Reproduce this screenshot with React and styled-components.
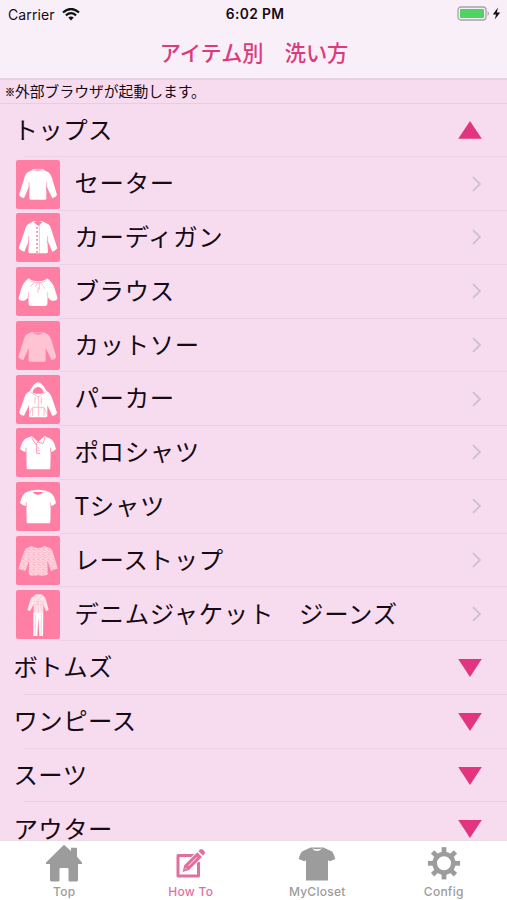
import React, { useState } from "react";
import styled, { createGlobalStyle } from "styled-components";

const GlobalStyle = createGlobalStyle`
  body {
    margin: 0;
    overflow: hidden;
    background: #f7dcef;
  }

  * {
    box-sizing: border-box;
  }
`;

const Screen = styled.div`
  height: 900px;
  display: flex;
  flex-direction: column;
  overflow: hidden;
  background: #f7dcef;
  color: #160a14;
  font-family: "Inter", "Noto Sans CJK JP", sans-serif;
`;

const Header = styled.header`
  flex: none;
  height: 80px;
  background: #f8eff9;
  border-bottom: 2px solid #e5d3e1;
`;

const StatusBar = styled.div`
  height: 27px;
  padding: 0 5px 0 8px;
  display: grid;
  grid-template-columns: 1fr auto 1fr;
  align-items: center;
  font-size: 14px;
  line-height: 27px;
`;

const StatusLeft = styled.div`
  display: flex;
  align-items: center;
  gap: 7px;
  letter-spacing: 0.1px;
`;

const StatusTime = styled.div`
  padding: 1px 0 0;
  font-size: 13.8px;
  font-weight: 600;
  letter-spacing: 0.35px;
`;

const StatusRight = styled.div`
  display: flex;
  align-items: center;
  justify-content: flex-end;
`;

const PageTitle = styled.h1`
  margin: 0;
  height: 51px;
  padding-left: 1px;
  font-family: "Noto Sans CJK JP", sans-serif;
  font-size: 21.2px;
  font-weight: 500;
  line-height: 50px;
  text-align: center;
  color: #dc3a7d;
`;

const Notice = styled.p`
  flex: none;
  margin: 0;
  height: 23.5px;
  padding-left: 5px;
  border-bottom: 1px solid #eaccdf;
  display: flex;
  font-family: "Noto Sans CJK JP", sans-serif;
  font-size: 14.8px;
  line-height: 21px;
`;

const NoticeMark = styled.span`
  font-size: 10px;
  line-height: 23px;
  -webkit-text-stroke: 0.3px #160a14;
`;

const List = styled.div`
  flex: 1;
  min-height: 0;
  overflow: hidden;
`;

const Row = styled.div`
  position: relative;
  height: 53.77px;
  padding: 0 25px 0 ${(props) => (props.$item ? 15.5 : 13.5)}px;
  display: flex;
  align-items: center;

  &::after {
    content: "";
    position: absolute;
    left: ${(props) => (props.$item ? 60 : 24)}px;
    right: 0;
    bottom: 0;
    height: 1px;
    background: #edd0e3;
  }
`;

const RowLabel = styled.span`
  flex: 1;
  padding-left: ${(props) => (props.$item ? 15 : 0)}px;
  padding-bottom: 3.5px;
  font-family: "Noto Sans CJK JP", sans-serif;
  font-size: 24.4px;
  line-height: 36px;
  letter-spacing: ${(props) => (props.$item ? 0.7 : 0.45)}px;
  white-space: pre;
`;

const Thumb = styled.svg`
  flex: none;
  width: 44px;
  height: 49px;
  border-radius: 2px;
  background: #ff7fa4;
`;

const TabBar = styled.nav`
  flex: none;
  height: 60px;
  padding-left: 1px;
  display: grid;
  grid-template-columns: repeat(4, 1fr);
  background: #ffffff;
  border-top: 1px solid #eadde6;
`;

const Tab = styled.div`
  display: flex;
  flex-direction: column;
  align-items: center;
  color: ${(props) => (props.$active ? "#e2709f" : "#9c9c9c")};
`;

const TabIcon = styled.svg`
  width: 42px;
  height: 43px;
`;

const TabLabel = styled.span`
  font-size: 12px;
  font-weight: 500;
  line-height: 15px;
  letter-spacing: 0.25px;
`;

const PINK = "#ff7fa4";

const SHIRT =
  "M50 29 Q66 35 82 29 L97 37 Q104 41 108 54 L123 105 Q119 112 109 115 L91 78 L91 116 Q91 119 87 119 L44 119 Q40 119 40 116 L40 78 L24 115 Q13 112 9 105 L25 54 Q29 40 35 37 Z";
const TEE =
  "M47 25 Q66 35 86 25 L101 31 Q113 35 120 63 Q112 72 104 73 L103 120 Q103 124 99 124 L36 124 Q32 124 32 120 L31 73 Q20 71 12 63 Q19 36 31 31 Z";

function Sweater() {
  return (
    <>
      <path d={SHIRT} fill="#fff" />
      <path d="M50 29 Q66 26 82 29 Q66 38 50 29Z" fill={PINK} stroke="#fff" strokeWidth="2" />
      <path d="M39 67 V91 M92 67 V91" stroke={PINK} strokeWidth="2" />
    </>
  );
}

function Cardigan() {
  return (
    <>
      <path
        d="M52 25 L79 25 L97 34 Q103 38 107 53 L124 106 Q119 113 109 116 L94 82 L96 116 Q96 121 90 121 L43 121 Q37 121 37 116 L39 82 L25 116 Q13 113 8 106 L26 53 Q30 38 36 34 Z"
        fill="#fff"
      />
      <path d="M53 28 Q66 22 79 28 L67 39 Z" fill={PINK} />
      <path d="M70 36 V120" stroke={PINK} strokeWidth="1.5" />
      <path d="M63 42 V119" stroke={PINK} strokeWidth="5" strokeDasharray="5 7" />
      <path d="M38 70 V91 M95 70 V91" stroke={PINK} strokeWidth="2" />
    </>
  );
}

function Blouse() {
  return (
    <>
      <path
        d="M39 34 Q44 43 66 43 Q87 43 93 34 Q108 44 115 62 L124 91 Q126 101 114 101 Q100 103 95 88 L94 112 Q94 117 87 117 L45 117 Q38 117 38 112 L37 88 Q31 103 18 101 Q6 101 8 91 L17 62 Q23 44 39 34 Z"
        fill="#fff"
      />
      <path
        d="M43 42 Q65 52 89 42 M65 48 L58 60 M70 48 V68 M76 49 L87 65 M66 60 V77 M53 48 L43 59 M37 75 V90 M95 75 V90"
        fill="none"
        stroke="#ff9ab7"
        strokeWidth="2"
      />
    </>
  );
}

function CutAndSewn() {
  return (
    <>
      <path d={SHIRT} transform="translate(-2 3)" fill="#ffc4d4" />
      <path d="M50 33 H82 Q75 41 66 41 Q56 41 50 33Z" fill={PINK} />
      <path d="M55 34 Q66 39 77 34" fill="none" stroke="#ffc4d4" strokeWidth="2" />
    </>
  );
}

function Parka() {
  return (
    <>
      <path
        d="M66 21 Q76 24 82 32 L93 49 Q103 54 108 69 L123 113 Q120 121 109 122 L94 91 V124 Q94 127 90 127 H43 Q39 127 39 124 V91 L24 122 Q13 121 9 113 L25 68 Q29 54 41 49 L51 32 Q57 24 66 21 Z"
        fill="#fff"
      />
      <path d="M50 53 Q50 39 66 35 Q82 39 83 53 Q66 60 50 53Z" fill={PINK} />
      <path
        d="M43 51 L66 66 L90 51 M67 65 V125 M57 66 V86 M76 66 V86 M50 97 H84 L92 116 M50 97 L41 116 M50 99 V123 M84 99 V123"
        fill="none"
        stroke="#ff9ab7"
        strokeWidth="2"
      />
    </>
  );
}

function PoloShirt() {
  return (
    <>
      <path d={TEE} fill="#fff" />
      <path d="M50 28 Q66 18 82 28 L67 43 Z" fill={PINK} />
      <path d="M47 29 L59 49 L66 42 L81 47 L87 29 L82 26 L66 41 L51 26 Z" fill="#fff" stroke={PINK} strokeWidth="2.4" />
      <path d="M62 47 V76 H72 M65 60 H70 M65 68 H70 M30 59 V73 M104 59 V73" fill="none" stroke={PINK} strokeWidth="2.5" />
    </>
  );
}

function TShirt() {
  return (
    <>
      <path d={TEE} fill="#fff" />
      <path d="M48 26 Q66 21 85 26 Q82 39 66 39 Q51 39 48 26Z" fill="#fff" />
      <path d="M50 30 H82 Q76 39 66 39 Q56 39 50 30Z" fill={PINK} />
      <path d="M31 61 V75 M103 61 V75" stroke={PINK} strokeWidth="2" />
    </>
  );
}

function LaceTop() {
  return (
    <>
      <defs>
        <pattern id="lace" width="15" height="15" patternUnits="userSpaceOnUse">
          <rect width="15" height="15" fill="#ffd8e3" />
          <path d="M0 3 Q8 0 7 7 T15 13 M2 12 Q5 7 10 14" fill="none" stroke="#ff9fba" strokeWidth="1.8" />
          <circle cx="12" cy="5" r="1.8" fill="#ff9fba" />
        </pattern>
      </defs>
      <path
        d="M46 30 Q66 42 86 30 L101 36 Q109 40 112 53 L125 97 L105 105 L94 74 L95 116 Q82 121 66 118 Q50 121 38 116 L39 74 L28 105 L7 98 L22 53 Q27 38 33 36 Z"
        fill="url(#lace)"
      />
    </>
  );
}

function DenimSet() {
  return (
    <>
      <path
        d="M60 13 H76 L85 20 Q89 23 91 34 L98 59 L90 64 L82 43 V66 H53 V43 L42 64 L34 60 L43 30 Q45 21 51 20 Z"
        fill="#ffe6ed"
      />
      <path d="M52 67 H82 L81 138 H70 L67 82 L64 138 H52 Z" fill="#fff" />
      <path
        d="M57 18 L67 29 L78 18 M67 29 V65 M53 34 H64 V43 H54 M71 34 H81 V43 H71 M55 65 L61 44 M80 65 L73 44 M58 73 V135 M76 73 V135"
        fill="none"
        stroke="#ffabc2"
        strokeWidth="1.6"
      />
    </>
  );
}

const categories = [
  {
    name: "トップス",
    items: [
      { name: "セーター", icon: Sweater },
      { name: "カーディガン", icon: Cardigan },
      { name: "ブラウス", icon: Blouse },
      { name: "カットソー", icon: CutAndSewn },
      { name: "パーカー", icon: Parka },
      { name: "ポロシャツ", icon: PoloShirt },
      { name: "Tシャツ", icon: TShirt },
      { name: "レーストップ", icon: LaceTop },
      { name: "デニムジャケット　ジーンズ", icon: DenimSet },
    ],
  },
  { name: "ボトムズ", items: [] },
  { name: "ワンピース", items: [] },
  { name: "スーツ", items: [] },
  { name: "アウター", items: [] },
];

function WifiIcon() {
  return (
    <svg width="18" height="13" viewBox="0 0 18 13">
      <path d="M1 4.5 Q9 -2.5 17 4.5" fill="none" stroke="#111" strokeWidth="2.3" />
      <path d="M3.9 7.4 Q9 3 14.1 7.4" fill="none" stroke="#111" strokeWidth="2.1" />
      <path d="M6.3 9.6 Q9 7.2 11.7 9.6 L9 12.4 Z" fill="#111" />
    </svg>
  );
}

function BatteryIcon() {
  return (
    <svg width="45" height="16" viewBox="0 0 45 16">
      <rect x="1" y="1" width="28" height="13" rx="3" fill="#f8eff9" stroke="#a9a3aa" strokeWidth="1.3" />
      <rect x="3" y="3" width="24" height="9" rx="1" fill="#4cd661" />
      <path d="M30.6 5 Q33.4 7.5 30.6 10Z" fill="#a9a3aa" />
      <path d="M41 1.5 L35.8 8.4 H39 L37.8 13.5 L43.2 6.6 H39.8 Z" fill="#111" />
    </svg>
  );
}

function Chevron() {
  return (
    <svg width="11" height="17" viewBox="0 0 11 17">
      <path d="M2 1.2 L9 8 L2 14.8" fill="none" stroke="#cfc0cd" strokeWidth="1.8" />
    </svg>
  );
}

function Triangle({ open }) {
  return (
    <svg width="24" height="18" viewBox="0 0 24 18">
      <path d={open ? "M12 0 L23.8 17.7 H0.2Z" : "M0.2 0 H23.8 L12 18Z"} fill="#e3347f" />
    </svg>
  );
}

function HomeIcon() {
  return (
    <TabIcon viewBox="0 0 42 43">
      <path
        d="M21 3.8 L28 10 V6.8 H34 V15.7 L39 21.5 V23 H35 V39 Q35 40.5 33.5 40.5 H26.5 Q25.5 40.5 25.5 39 V28 Q25.5 27 24.5 27 H17.5 Q16.5 27 16.5 28 V39 Q16.5 40.5 15.5 40.5 H8.5 Q7 40.5 7 39 V23 H3 V21.5 Z"
        fill="currentColor"
      />
    </TabIcon>
  );
}

function EditIcon() {
  return (
    <TabIcon viewBox="0 0 42 43">
      <path d="M27.5 14.5 H8 V35 H28.5 V21" fill="none" stroke="currentColor" strokeWidth="3" strokeLinejoin="round" />
      <path
        d="M12.5 31 L14.3 24.2 L27.3 11.2 L32 16 L19 29 Z"
        fill="currentColor"
        stroke="#fff"
        strokeWidth="1.6"
        paintOrder="stroke"
      />
      <path d="M28.4 10.1 L30 8.5 Q31.4 7.3 33 8.8 L34.4 10.2 Q35.5 11.7 34.4 13.1 L33 14.7 Z" fill="currentColor" />
      <path d="M18.5 24.8 L27 16.3 M15 28.4 L16.2 27.2" stroke="#fff" strokeWidth="0.9" />
    </TabIcon>
  );
}

function ClosetIcon() {
  return (
    <TabIcon viewBox="0 0 42 43">
      <path
        d="M14.5 6.5 H27.5 L36 10.5 Q38 12.5 39.3 18 L33.8 20.2 L32 19.2 V39.5 H10 V19.2 L8.2 20.2 L2.7 18 Q4 12.5 6 10.5 Z"
        fill="currentColor"
      />
      <path d="M16 7.5 Q21 9 26 7.5 Q21 12.5 16 7.5Z" fill="#fff" />
    </TabIcon>
  );
}

function ConfigIcon() {
  return (
    <TabIcon viewBox="0 0 42 43">
      <circle cx="21" cy="22.3" r="9.3" fill="none" stroke="currentColor" strokeWidth="4.6" />
      {[0, 45, 90, 135, 180, 225, 270, 315].map((angle) => (
        <path
          key={angle}
          d="M18.6 12 V6.2 H23.4 V12 Z"
          fill="currentColor"
          transform={`rotate(${angle} 21 22.3)`}
        />
      ))}
    </TabIcon>
  );
}

const tabs = [
  { name: "Top", icon: HomeIcon },
  { name: "How To", icon: EditIcon },
  { name: "MyCloset", icon: ClosetIcon },
  { name: "Config", icon: ConfigIcon },
];

function CategorySection({ category, open, onToggle }) {
  return (
    <>
      <Row onClick={onToggle}>
        <RowLabel>{category.name}</RowLabel>
        <Triangle open={open} />
      </Row>
      {open &&
        category.items.map((item) => {
          const Icon = item.icon;
          return (
            <Row key={item.name} $item>
              <Thumb viewBox="0 0 132 147">
                <Icon />
              </Thumb>
              <RowLabel $item>{item.name}</RowLabel>
              <Chevron />
            </Row>
          );
        })}
    </>
  );
}

function App() {
  const [opened, setOpened] = useState("トップス");
  const [activeTab, setActiveTab] = useState("How To");

  return (
    <Screen>
      <GlobalStyle />
      <Header>
        <StatusBar>
          <StatusLeft>
            Carrier
            <WifiIcon />
          </StatusLeft>
          <StatusTime>6:02 PM</StatusTime>
          <StatusRight>
            <BatteryIcon />
          </StatusRight>
        </StatusBar>
        <PageTitle>アイテム別　洗い方</PageTitle>
      </Header>
      <Notice>
        <NoticeMark>※</NoticeMark>
        外部ブラウザが起動します。
      </Notice>
      <List>
        {categories.map((category) => (
          <CategorySection
            key={category.name}
            category={category}
            open={opened === category.name}
            onToggle={() => setOpened(opened === category.name ? "" : category.name)}
          />
        ))}
      </List>
      <TabBar>
        {tabs.map((tab) => {
          const Icon = tab.icon;
          return (
            <Tab key={tab.name} $active={activeTab === tab.name} onClick={() => setActiveTab(tab.name)}>
              <Icon />
              <TabLabel>{tab.name}</TabLabel>
            </Tab>
          );
        })}
      </TabBar>
    </Screen>
  );
}

export default App;
